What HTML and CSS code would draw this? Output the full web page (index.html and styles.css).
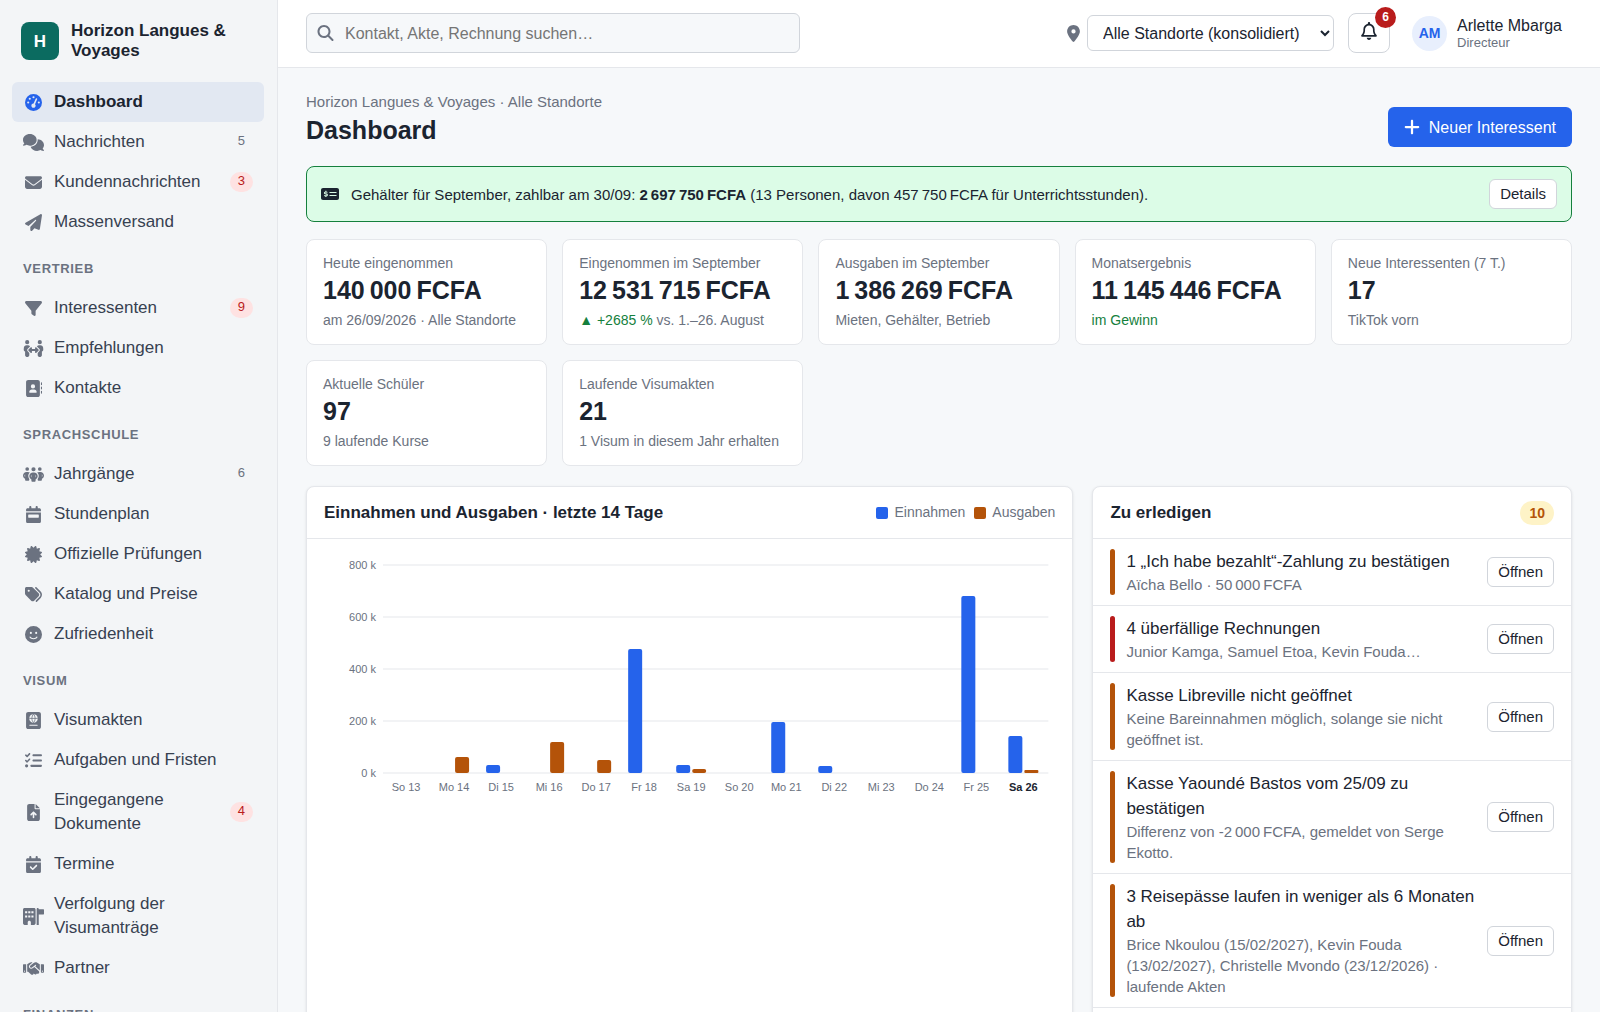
FILE: index.html
```html
<!DOCTYPE html>
<html lang="de">
  <head>
    <meta charset="UTF-8" />
    <meta name="viewport" content="width=device-width, initial-scale=1.0" />
    <title>Dashboard · Horizon Langues & Voyages</title>
    <link rel="stylesheet" href="styles.css">
  </head>
  <body>
    <div class="app">
      <aside class="sidebar">
        <div class="brand">
          <span class="brand-logo">H</span>
          <span class="brand-name">Horizon Langues &amp; Voyages</span>
        </div>

        <nav class="nav">
          <a class="nav-item active" href="#">
            <svg class="icon" viewBox="0 0 512 512"><path d="M0 256a256 256 0 1 1 512 0A256 256 0 1 1 0 256zM288 96a32 32 0 1 0 -64 0 32 32 0 1 0 64 0zM256 416c35.3 0 64-28.7 64-64c0-17.4-6.9-33.1-18.1-44.6L366 161.7c5.3-12.1-.2-26.3-12.3-31.6s-26.3 .2-31.6 12.3L257.9 288c-.6 0-1.3 0-1.9 0c-35.3 0-64 28.7-64 64s28.7 64 64 64zM176 144a32 32 0 1 0 -64 0 32 32 0 1 0 64 0zM96 288a32 32 0 1 0 0-64 32 32 0 1 0 0 64zm352-32a32 32 0 1 0 -64 0 32 32 0 1 0 64 0z"/></svg>
            <span class="nav-text">Dashboard</span>
          </a>
          <a class="nav-item" href="#">
            <svg class="icon" viewBox="0 0 640 512"><path d="M208 352c114.9 0 208-78.8 208-176S322.9 0 208 0S0 78.8 0 176c0 38.6 14.7 74.3 39.6 103.4c-3.5 9.4-8.7 17.7-14.2 24.7c-4.8 6.2-9.7 11-13.3 14.3c-1.8 1.6-3.3 2.9-4.3 3.7c-.5 .4-.9 .7-1.1 .8l-.2 .2C1 327.2-1.4 334.4 .8 340.9S9.1 352 16 352c21.8 0 43.8-5.6 62.1-12.5c9.2-3.5 17.8-7.4 25.2-11.4C134.1 343.3 169.8 352 208 352zM448 176c0 112.3-99.1 196.9-216.5 207C255.8 457.4 336.4 512 432 512c38.2 0 73.9-8.7 104.7-23.9c7.5 4 16 7.9 25.2 11.4c18.3 6.9 40.3 12.5 62.1 12.5c6.9 0 13.1-4.5 15.2-11.1c2.1-6.6-.2-13.8-5.8-17.9l-.2-.2c-.2-.2-.6-.4-1.1-.8c-1-.8-2.5-2-4.3-3.7c-3.6-3.3-8.5-8.1-13.3-14.3c-5.5-7-10.7-15.4-14.2-24.7c24.9-29 39.6-64.7 39.6-103.4c0-92.8-84.9-168.9-192.6-175.5c.4 5.1 .6 10.3 .6 15.5z"/></svg>
            <span class="nav-text">Nachrichten</span>
            <span class="count">5</span>
          </a>
          <a class="nav-item" href="#">
            <svg class="icon" viewBox="0 0 512 512"><path d="M48 64C21.5 64 0 85.5 0 112c0 15.1 7.1 29.3 19.2 38.4L236.8 313.6c11.4 8.5 27 8.5 38.4 0L492.8 150.4c12.1-9.1 19.2-23.3 19.2-38.4c0-26.5-21.5-48-48-48H48zM0 176V384c0 35.3 28.7 64 64 64H448c35.3 0 64-28.7 64-64V176L294.4 339.2c-22.8 17.1-54 17.1-76.8 0L0 176z"/></svg>
            <span class="nav-text">Kundennachrichten</span>
            <span class="count alert">3</span>
          </a>
          <a class="nav-item" href="#">
            <svg class="icon" viewBox="0 0 512 512"><path d="M498.1 5.6c10.1 7 15.4 19.1 13.5 31.2l-64 416c-1.5 9.7-7.4 18.2-16 23s-18.9 5.4-28 1.6L284 427.7l-68.5 74.1c-8.9 9.7-22.9 12.9-35.2 8.1S160 493.2 160 480V396.4c0-4 1.5-7.8 4.2-10.7L331.8 202.8c5.8-6.3 5.6-16-.4-22s-15.7-6.4-22-.7L106 360.8 17.7 316.6C7.1 311.3 .3 300.7 0 288.9s5.9-22.8 16.1-28.7l448-256c10.7-6.1 23.9-5.5 34 1.4z"/></svg>
            <span class="nav-text">Massenversand</span>
          </a>

          <h2 class="nav-title">Vertrieb</h2>
          <a class="nav-item" href="#">
            <svg class="icon" viewBox="0 0 512 512"><path d="M3.9 54.9C10.5 40.9 24.5 32 40 32H472c15.5 0 29.5 8.9 36.1 22.9s4.6 30.5-5.2 42.5L320 320.9V448c0 12.1-6.8 23.2-17.7 28.6s-23.8 4.3-33.5-3l-64-48c-8.1-6-12.8-15.5-12.8-25.6V320.9L9 97.3C-.7 85.4-2.8 68.8 3.9 54.9z"/></svg>
            <span class="nav-text">Interessenten</span>
            <span class="count alert">9</span>
          </a>
          <a class="nav-item" href="#">
            <svg class="icon" viewBox="0 0 640 512"><path d="M64 64a64 64 0 1 1 128 0A64 64 0 1 1 64 64zM25.9 233.4C29.3 191.9 64 160 105.6 160l44.8 0c27 0 51 13.4 65.5 34.1c-2.7 1.9-5.2 4-7.5 6.3l-64 64c-21.9 21.9-21.9 57.3 0 79.2L192 391.2 192 464c0 26.5-21.5 48-48 48l-32 0c-26.5 0-48-21.5-48-48l0-115.7c-26.5-9.5-44.7-35.8-42.2-65.6l4.1-49.3zM448 64a64 64 0 1 1 128 0A64 64 0 1 1 448 64zM431.6 200.4c-2.3-2.3-4.9-4.4-7.5-6.3c14.5-20.7 38.6-34.1 65.5-34.1l44.8 0c41.6 0 76.3 31.9 79.7 73.4l4.1 49.3c2.5 29.8-15.7 56.1-42.2 65.6L576 464c0 26.5-21.5 48-48 48l-32 0c-26.5 0-48-21.5-48-48l0-72.8 47.6-47.6c21.9-21.9 21.9-57.3 0-79.2l-64-64zM272 240l0 32 96 0 0-32c0-9.7 5.8-18.5 14.8-22.2s19.3-1.7 26.2 5.2l64 64c9.4 9.4 9.4 24.6 0 33.9l-64 64c-6.9 6.9-17.2 8.9-26.2 5.2s-14.8-12.5-14.8-22.2l0-32-96 0 0 32c0 9.7-5.8 18.5-14.8 22.2s-19.3 1.7-26.2-5.2l-64-64c-9.4-9.4-9.4-24.6 0-33.9l64-64c6.9-6.9 17.2-8.9 26.2-5.2s14.8 12.5 14.8 22.2z"/></svg>
            <span class="nav-text">Empfehlungen</span>
          </a>
          <a class="nav-item" href="#">
            <svg class="icon" viewBox="0 0 512 512"><path d="M96 0C60.7 0 32 28.7 32 64V448c0 35.3 28.7 64 64 64H384c35.3 0 64-28.7 64-64V64c0-35.3-28.7-64-64-64H96zM208 288h64c44.2 0 80 35.8 80 80c0 8.8-7.2 16-16 16H144c-8.8 0-16-7.2-16-16c0-44.2 35.8-80 80-80zm-32-96a64 64 0 1 1 128 0 64 64 0 1 1 -128 0zM512 80c0-8.8-7.2-16-16-16s-16 7.2-16 16v64c0 8.8 7.2 16 16 16s16-7.2 16-16V80zM496 192c-8.8 0-16 7.2-16 16v64c0 8.8 7.2 16 16 16s16-7.2 16-16V208c0-8.8-7.2-16-16-16zm16 144c0-8.8-7.2-16-16-16s-16 7.2-16 16v64c0 8.8 7.2 16 16 16s16-7.2 16-16V336z"/></svg>
            <span class="nav-text">Kontakte</span>
          </a>

          <h2 class="nav-title">Sprachschule</h2>
          <a class="nav-item" href="#">
            <svg class="icon" viewBox="0 0 640 512"><path d="M72 88a56 56 0 1 1 112 0A56 56 0 1 1 72 88zM64 245.7C54 256.9 48 271.8 48 288s6 31.1 16 42.3V245.7zm144.4-49.3C178.7 222.7 160 261.2 160 304c0 34.3 12 65.8 32 90.5V416c0 17.7-14.3 32-32 32H96c-17.7 0-32-14.3-32-32V389.2C26.2 371.2 0 332.7 0 288c0-61.9 50.1-112 112-112h32c24 0 46.2 7.5 64.4 20.3zM448 416V394.5c20-24.7 32-56.2 32-90.5c0-42.8-18.7-81.3-48.4-107.7C449.8 183.5 472 176 496 176h32c61.9 0 112 50.1 112 112c0 44.7-26.2 83.2-64 101.2V416c0 17.7-14.3 32-32 32H480c-17.7 0-32-14.3-32-32zm8-328a56 56 0 1 1 112 0A56 56 0 1 1 456 88zM576 245.7v84.7c10-11.3 16-26.1 16-42.3s-6-31.1-16-42.3zM320 32a64 64 0 1 1 0 128 64 64 0 1 1 0-128zM240 304c0 16.2 6 31 16 42.3V261.7c-10 11.3-16 26.1-16 42.3zm144-42.3v84.7c10-11.3 16-26.1 16-42.3s-6-31.1-16-42.3zM448 304c0 44.7-26.2 83.2-64 101.2V448c0 17.7-14.3 32-32 32H288c-17.7 0-32-14.3-32-32V405.2c-37.8-18-64-56.5-64-101.2c0-61.9 50.1-112 112-112h32c61.9 0 112 50.1 112 112z"/></svg>
            <span class="nav-text">Jahrgänge</span>
            <span class="count">6</span>
          </a>
          <a class="nav-item" href="#">
            <svg class="icon" viewBox="0 0 448 512"><path d="M128 0c17.7 0 32 14.3 32 32V64H288V32c0-17.7 14.3-32 32-32s32 14.3 32 32V64h48c26.5 0 48 21.5 48 48v48H0V112C0 85.5 21.5 64 48 64H96V32c0-17.7 14.3-32 32-32zM0 192H448V464c0 26.5-21.5 48-48 48H48c-26.5 0-48-21.5-48-48V192zm80 64c-8.8 0-16 7.2-16 16v64c0 8.8 7.2 16 16 16H368c8.8 0 16-7.2 16-16V272c0-8.8-7.2-16-16-16H80z"/></svg>
            <span class="nav-text">Stundenplan</span>
          </a>
          <a class="nav-item" href="#">
            <svg class="icon" viewBox="0 0 512 512"><path d="M211 7.3C205 1 196-1.4 187.6 .8s-14.9 8.9-17.1 17.3L154.7 80.6l-62-17.5c-8.4-2.4-17.4 0-23.5 6.1s-8.5 15.1-6.1 23.5l17.5 62L18.1 170.6c-8.4 2.1-15 8.7-17.3 17.1S1 205 7.3 211l46.2 45L7.3 301C1 307-1.4 316 .8 324.4s8.9 14.9 17.3 17.1l62.5 15.8-17.5 62c-2.4 8.4 0 17.4 6.1 23.5s15.1 8.5 23.5 6.1l62-17.5 15.8 62.5c2.1 8.4 8.7 15 17.1 17.3s17.3-.2 23.4-6.4l45-46.2 45 46.2c6.1 6.2 15 8.7 23.4 6.4s14.9-8.9 17.1-17.3l15.8-62.5 62 17.5c8.4 2.4 17.4 0 23.5-6.1s8.5-15.1 6.1-23.5l-17.5-62 62.5-15.8c8.4-2.1 15-8.7 17.3-17.1s-.2-17.4-6.4-23.4l-46.2-45 46.2-45c6.2-6.1 8.7-15 6.4-23.4s-8.9-14.9-17.3-17.1l-62.5-15.8 17.5-62c2.4-8.4 0-17.4-6.1-23.5s-15.1-8.5-23.5-6.1l-62 17.5L341.4 18.1c-2.1-8.4-8.7-15-17.1-17.3S307 1 301 7.3L256 53.5 211 7.3z"/></svg>
            <span class="nav-text">Offizielle Prüfungen</span>
          </a>
          <a class="nav-item" href="#">
            <svg class="icon" viewBox="0 0 512 512"><path d="M345 39.1L472.8 168.4c52.4 53 52.4 138.2 0 191.2L360.8 472.9c-9.3 9.4-24.5 9.5-33.9 .2s-9.5-24.5-.2-33.9L438.6 325.9c33.9-34.3 33.9-89.4 0-123.7L310.9 72.9c-9.3-9.4-9.2-24.6 .2-33.9s24.6-9.2 33.9 .2zM0 229.5V80C0 53.5 21.5 32 48 32H197.5c17 0 33.3 6.7 45.3 18.7l168 168c25 25 25 65.5 0 90.5L277.3 442.7c-25 25-65.5 25-90.5 0l-168-168C6.7 262.7 0 246.5 0 229.5zM144 144a32 32 0 1 0 -64 0 32 32 0 1 0 64 0z"/></svg>
            <span class="nav-text">Katalog und Preise</span>
          </a>
          <a class="nav-item" href="#">
            <svg class="icon" viewBox="0 0 512 512"><path d="M256 512A256 256 0 1 0 256 0a256 256 0 1 0 0 512zM164.1 325.5C182 346.2 212.6 368 256 368s74-21.8 91.9-42.5c5.8-6.7 15.9-7.4 22.6-1.6s7.4 15.9 1.6 22.6C349.8 372.1 311.1 400 256 400s-93.8-27.9-116.1-53.5c-5.8-6.7-5.1-16.8 1.6-22.6s16.8-5.1 22.6 1.6zM144.4 208a32 32 0 1 1 64 0 32 32 0 1 1 -64 0zm192-32a32 32 0 1 1 0 64 32 32 0 1 1 0-64z"/></svg>
            <span class="nav-text">Zufriedenheit</span>
          </a>

          <h2 class="nav-title">Visum</h2>
          <a class="nav-item" href="#">
            <svg class="icon" viewBox="0 0 448 512">
              <path d="M0 64C0 28.7 28.7 0 64 0H384c35.3 0 64 28.7 64 64V448c0 35.3-28.7 64-64 64H64c-35.3 0-64-28.7-64-64V64zM224 64a128 128 0 1 0 0 256 128 128 0 1 0 0-256zM112 384c-8.8 0-16 7.2-16 16s7.2 16 16 16H336c8.8 0 16-7.2 16-16s-7.2-16-16-16H112z"/>
              <path class="icon-line" d="M96 192H352M224 64C160 130 160 254 224 320M224 64C288 130 288 254 224 320"/>
            </svg>
            <span class="nav-text">Visumakten</span>
          </a>
          <a class="nav-item" href="#">
            <svg class="icon" viewBox="0 0 512 512"><path d="M152.1 38.2c9.9 8.9 10.7 24 1.8 33.9l-72 80c-4.4 4.9-10.6 7.8-17.2 7.9s-12.9-2.4-17.6-7L7 113C-2.3 103.6-2.3 88.4 7 79s24.6-9.4 33.9 0l22.1 22.1 55.1-61.2c8.9-9.9 24-10.7 33.9-1.8zm0 160c9.9 8.9 10.7 24 1.8 33.9l-72 80c-4.4 4.9-10.6 7.8-17.2 7.9s-12.9-2.4-17.6-7L7 273c-9.4-9.4-9.4-24.6 0-33.9s24.6-9.4 33.9 0l22.1 22.1 55.1-61.2c8.9-9.9 24-10.7 33.9-1.8zM224 96c0-17.7 14.3-32 32-32H480c17.7 0 32 14.3 32 32s-14.3 32-32 32H256c-17.7 0-32-14.3-32-32zm0 160c0-17.7 14.3-32 32-32H480c17.7 0 32 14.3 32 32s-14.3 32-32 32H256c-17.7 0-32-14.3-32-32zM160 416c0-17.7 14.3-32 32-32H480c17.7 0 32 14.3 32 32s-14.3 32-32 32H192c-17.7 0-32-14.3-32-32zM48 368a48 48 0 1 1 0 96 48 48 0 1 1 0-96z"/></svg>
            <span class="nav-text">Aufgaben und Fristen</span>
          </a>
          <a class="nav-item" href="#">
            <svg class="icon" viewBox="0 0 384 512"><path d="M64 0C28.7 0 0 28.7 0 64V448c0 35.3 28.7 64 64 64H320c35.3 0 64-28.7 64-64V160H256c-17.7 0-32-14.3-32-32V0H64zM256 0V128H384L256 0zM216 408c0 13.3-10.7 24-24 24s-24-10.7-24-24V305.9l-31 31c-9.4 9.4-24.6 9.4-33.9 0s-9.4-24.6 0-33.9l72-72c9.4-9.4 24.6-9.4 33.9 0l72 72c9.4 9.4 9.4 24.6 0 33.9s-24.6 9.4-33.9 0l-31-31V408z"/></svg>
            <span class="nav-text">Eingegangene Dokumente</span>
            <span class="count alert">4</span>
          </a>
          <a class="nav-item" href="#">
            <svg class="icon" viewBox="0 0 448 512"><path d="M128 0c17.7 0 32 14.3 32 32V64H288V32c0-17.7 14.3-32 32-32s32 14.3 32 32V64h48c26.5 0 48 21.5 48 48v48H0V112C0 85.5 21.5 64 48 64H96V32c0-17.7 14.3-32 32-32zM0 192H448V464c0 26.5-21.5 48-48 48H48c-26.5 0-48-21.5-48-48V192zM329 305c9.4-9.4 9.4-24.6 0-33.9s-24.6-9.4-33.9 0l-95 95-47-47c-9.4-9.4-24.6-9.4-33.9 0s-9.4 24.6 0 33.9l64 64c9.4 9.4 24.6 9.4 33.9 0L329 305z"/></svg>
            <span class="nav-text">Termine</span>
          </a>
          <a class="nav-item" href="#">
            <svg class="icon" viewBox="0 0 640 512"><path d="M48 0C21.5 0 0 21.5 0 48V464c0 26.5 21.5 48 48 48h96V432c0-26.5 21.5-48 48-48s48 21.5 48 48v80h96c26.5 0 48-21.5 48-48V48c0-26.5-21.5-48-48-48H48zM64 96h64v64H64zM160 96h64v64h-64zM256 96h64v64h-64zM64 224h64v64H64zM160 224h64v64h-64zM256 224h64v64h-64zM448 0c-17.7 0-32 14.3-32 32V512h64V192H624c8.8 0 16-7.2 16-16V48c0-8.8-7.2-16-16-16H480c0-17.7-14.3-32-32-32z"/></svg>
            <span class="nav-text">Verfolgung der Visumanträge</span>
          </a>
          <a class="nav-item" href="#">
            <svg class="icon" viewBox="0 0 640 512"><path d="M323.4 85.2l-96.8 78.4c-16.1 13-19.2 36.4-7 53.1c12.9 17.8 38 21.3 55.3 7.8l99.3-77.2c7-5.4 17-4.2 22.5 2.8s4.2 17-2.8 22.5l-20.9 16.2L512 316.8V128h-.7l-3.9-2.5L434.8 79c-15.3-9.8-33.2-15-51.4-15c-21.8 0-43 7.5-60 21.2zm22.8 124.4l-51.7 40.2C263 274.3 217.3 268 193.7 235.6c-22.2-30.5-16.6-73.1 12.7-96.8l83.2-67.3c-11.6-4.9-24.1-7.4-36.8-7.4C234 64 215.7 69.6 200 80l-72 48V352h28.2l91.4 83.4c19.6 17.9 49.9 16.5 67.8-3.1c5.5-6.1 9.2-13.2 11.1-20.6l17 15.6c19.5 17.9 49.9 16.6 67.8-2.9c4.5-4.9 7.8-10.6 9.9-16.5c19.4 13 45.8 10.3 62.1-7.5c17.9-19.5 16.6-49.9-2.9-67.8l-134.2-123zM16 128c-8.8 0-16 7.2-16 16V352c0 17.7 14.3 32 32 32H64c17.7 0 32-14.3 32-32V128H16zM48 320a16 16 0 1 1 0 32 16 16 0 1 1 0-32zM544 128V352c0 17.7 14.3 32 32 32h32c17.7 0 32-14.3 32-32V144c0-8.8-7.2-16-16-16H544zm32 208a16 16 0 1 1 32 0 16 16 0 1 1 -32 0z"/></svg>
            <span class="nav-text">Partner</span>
          </a>

          <h2 class="nav-title">Finanzen</h2>
        </nav>
      </aside>

      <div class="page">
        <header class="topbar">
          <label class="search">
            <svg class="icon" viewBox="0 0 512 512"><path d="M416 208c0 45.9-14.9 88.3-40 122.7L502.6 457.4c12.5 12.5 12.5 32.8 0 45.3s-32.8 12.5-45.3 0L330.7 376c-34.4 25.2-76.8 40-122.7 40C93.1 416 0 322.9 0 208S93.1 0 208 0S416 93.1 416 208zM208 352a144 144 0 1 0 0-288 144 144 0 1 0 0 288z"/></svg>
            <input type="search" aria-label="Suche" placeholder="Kontakt, Akte, Rechnung suchen…" />
          </label>

          <div class="topbar-right">
            <label class="location">
              <svg class="pin" viewBox="0 0 384 512"><path d="M215.7 499.2C267 435 384 279.4 384 192C384 86 298 0 192 0S0 86 0 192c0 87.4 117 243 168.3 307.2c12.3 15.3 35.1 15.3 47.4 0zM192 128a64 64 0 1 1 0 128 64 64 0 1 1 0-128z"/></svg>
              <select aria-label="Standort">
                <option>Alle Standorte (konsolidiert)</option>
              </select>
            </label>
            <button class="bell" type="button" aria-label="Benachrichtigungen">
              <svg class="bell-icon" viewBox="0 0 448 512"><path d="M224 0c-17.7 0-32 14.3-32 32V51.2C119 66 64 130.6 64 208v25.4c0 45.4-15.5 89.5-43.8 124.9L5.3 377c-5.8 7.2-6.9 17.1-2.9 25.4S14.8 416 24 416H424c9.2 0 17.6-5.3 21.6-13.6s2.9-18.2-2.9-25.4l-14.9-18.6C399.5 322.9 384 278.8 384 233.4V208c0-77.4-55-142-128-156.8V32c0-17.7-14.3-32-32-32zm0 96c61.9 0 112 50.1 112 112v25.4c0 47.9 13.9 94.6 39.7 134.6H72.3C98.1 328 112 281.3 112 233.4V208c0-61.9 50.1-112 112-112zm64 352H224 160c0 17 6.7 33.3 18.7 45.3s28.3 18.7 45.3 18.7s33.3-6.7 45.3-18.7s18.7-28.3 18.7-45.3z"/></svg>
              <span class="bell-count">6</span>
            </button>
            <a class="user" href="#">
              <span class="avatar">AM</span>
              <span class="user-info">
                <span class="user-name">Arlette Mbarga</span>
                <span class="user-role">Directeur</span>
              </span>
            </a>
          </div>
        </header>

        <main class="content">
          <div class="page-head">
            <div>
              <p class="breadcrumb">Horizon Langues &amp; Voyages · Alle Standorte</p>
              <h1>Dashboard</h1>
            </div>
            <button class="btn-primary" type="button">
              <svg class="plus" viewBox="0 0 448 512"><path d="M256 80c0-17.7-14.3-32-32-32s-32 14.3-32 32V224H48c-17.7 0-32 14.3-32 32s14.3 32 32 32H192V432c0 17.7 14.3 32 32 32s32-14.3 32-32V288H400c17.7 0 32-14.3 32-32s-14.3-32-32-32H256V80z"/></svg>
              Neuer Interessent
            </button>
          </div>

          <div class="notice">
            <svg class="notice-icon" viewBox="0 0 576 512">
              <path d="M64 64C28.7 64 0 92.7 0 128V384c0 35.3 28.7 64 64 64H512c35.3 0 64-28.7 64-64V128c0-35.3-28.7-64-64-64H64z"/>
              <path class="notice-line" d="M272 208H496M272 304H496M204 208C190 188 108 184 108 222C108 262 206 242 206 286C206 326 124 322 106 300M156 152V184M156 320V352"/>
            </svg>
            <p>Gehälter für September, zahlbar am 30/09: <strong>2&#8239;697&#8239;750&#8239;FCFA</strong> (13 Personen, davon 457&#8239;750&#8239;FCFA für Unterrichtsstunden).</p>
            <button class="btn" type="button">Details</button>
          </div>

          <section class="stats">
            <article class="stat">
              <p class="stat-label">Heute eingenommen</p>
              <p class="stat-value">140&#8239;000&#8239;FCFA</p>
              <p class="stat-note">am 26/09/2026 · Alle Standorte</p>
            </article>
            <article class="stat">
              <p class="stat-label">Eingenommen im September</p>
              <p class="stat-value">12&#8239;531&#8239;715&#8239;FCFA</p>
              <p class="stat-note"><span class="up">▲ +2685 %</span> vs. 1.–26. August</p>
            </article>
            <article class="stat">
              <p class="stat-label">Ausgaben im September</p>
              <p class="stat-value">1&#8239;386&#8239;269&#8239;FCFA</p>
              <p class="stat-note">Mieten, Gehälter, Betrieb</p>
            </article>
            <article class="stat">
              <p class="stat-label">Monatsergebnis</p>
              <p class="stat-value">11&#8239;145&#8239;446&#8239;FCFA</p>
              <p class="stat-note"><span class="up">im Gewinn</span></p>
            </article>
            <article class="stat">
              <p class="stat-label">Neue Interessenten (7 T.)</p>
              <p class="stat-value">17</p>
              <p class="stat-note">TikTok vorn</p>
            </article>
            <article class="stat">
              <p class="stat-label">Aktuelle Schüler</p>
              <p class="stat-value">97</p>
              <p class="stat-note">9 laufende Kurse</p>
            </article>
            <article class="stat">
              <p class="stat-label">Laufende Visumakten</p>
              <p class="stat-value">21</p>
              <p class="stat-note">1 Visum in diesem Jahr erhalten</p>
            </article>
          </section>

          <div class="panels">
            <section class="panel">
              <header class="panel-head">
                <h2>Einnahmen und Ausgaben · letzte 14 Tage</h2>
                <div class="legend">
                  <span class="legend-item"><i class="swatch income"></i>Einnahmen</span>
                  <span class="legend-item"><i class="swatch expense"></i>Ausgaben</span>
                </div>
              </header>
              <svg class="chart" viewBox="0 0 731 244" role="img" aria-label="Einnahmen und Ausgaben">
                <g class="grid">
                  <path d="M59 10H724M59 62H724M59 114H724M59 166H724M59 218H724"/>
                </g>
                <g class="axis-y">
                  <text x="52" y="14">800 k</text>
                  <text x="52" y="66">600 k</text>
                  <text x="52" y="118">400 k</text>
                  <text x="52" y="170">200 k</text>
                  <text x="52" y="222">0 k</text>
                </g>
                <g class="bar-income">
                  <rect x="162" y="210" width="14" height="8" rx="2"/>
                  <rect x="304" y="94" width="14" height="124" rx="2"/>
                  <rect x="352" y="210" width="14" height="8" rx="2"/>
                  <rect x="447" y="167" width="14" height="51" rx="2"/>
                  <rect x="494" y="211" width="14" height="7" rx="2"/>
                  <rect x="637" y="41" width="14" height="177" rx="2"/>
                  <rect x="684" y="181" width="14" height="37" rx="2"/>
                </g>
                <g class="bar-expense">
                  <rect x="131" y="202" width="14" height="16" rx="2"/>
                  <rect x="226" y="187" width="14" height="31" rx="2"/>
                  <rect x="273" y="205" width="14" height="13" rx="2"/>
                  <rect x="368" y="214" width="14" height="4" rx="2"/>
                  <rect x="700" y="215" width="14" height="3" rx="1"/>
                </g>
                <g class="axis-x">
                  <text x="82" y="236">So 13</text>
                  <text x="130" y="236">Mo 14</text>
                  <text x="177" y="236">Di 15</text>
                  <text x="225" y="236">Mi 16</text>
                  <text x="272" y="236">Do 17</text>
                  <text x="320" y="236">Fr 18</text>
                  <text x="367" y="236">Sa 19</text>
                  <text x="415" y="236">So 20</text>
                  <text x="462" y="236">Mo 21</text>
                  <text x="510" y="236">Di 22</text>
                  <text x="557" y="236">Mi 23</text>
                  <text x="605" y="236">Do 24</text>
                  <text x="652" y="236">Fr 25</text>
                  <text x="699" y="236" class="today">Sa 26</text>
                </g>
              </svg>
            </section>

            <section class="panel">
              <header class="panel-head">
                <h2>Zu erledigen</h2>
                <span class="todo-count">10</span>
              </header>
              <ul class="todo">
                <li>
                  <div class="todo-text">
                    <p class="todo-title">1 „Ich habe bezahlt“-Zahlung zu bestätigen</p>
                    <p class="todo-sub">Aïcha Bello · 50&#8239;000&#8239;FCFA</p>
                  </div>
                  <button class="btn" type="button">Öffnen</button>
                </li>
                <li class="danger">
                  <div class="todo-text">
                    <p class="todo-title">4 überfällige Rechnungen</p>
                    <p class="todo-sub">Junior Kamga, Samuel Etoa, Kevin Fouda…</p>
                  </div>
                  <button class="btn" type="button">Öffnen</button>
                </li>
                <li>
                  <div class="todo-text">
                    <p class="todo-title">Kasse Libreville nicht geöffnet</p>
                    <p class="todo-sub">Keine Bareinnahmen möglich, solange sie nicht geöffnet ist.</p>
                  </div>
                  <button class="btn" type="button">Öffnen</button>
                </li>
                <li>
                  <div class="todo-text">
                    <p class="todo-title">Kasse Yaoundé Bastos vom 25/09 zu bestätigen</p>
                    <p class="todo-sub">Differenz von -2&#8239;000&#8239;FCFA, gemeldet von Serge Ekotto.</p>
                  </div>
                  <button class="btn" type="button">Öffnen</button>
                </li>
                <li>
                  <div class="todo-text">
                    <p class="todo-title">3 Reisepässe laufen in weniger als 6 Monaten ab</p>
                    <p class="todo-sub">Brice Nkoulou (15/02/2027), Kevin Fouda (13/02/2027), Christelle Mvondo (23/12/2026) · laufende Akten</p>
                  </div>
                  <button class="btn" type="button">Öffnen</button>
                </li>
              </ul>
            </section>
          </div>
        </main>
      </div>
    </div>
  </body>
</html>
```

FILE: styles.css
```css
:root {
  --bg: #f6f8fa;
  --sidebar: #f3f5f7;
  --border: #e5e7eb;
  --border-strong: #d1d5db;
  --text: #1b2430;
  --muted: #6b7280;
  --primary: #2563eb;
  --orange: #b45309;
  --red: #b91c1c;
  --green: #15803d;
}
* {
  box-sizing: border-box;
}
body {
  margin: 0;
  font-family: "Liberation Sans", Arial, sans-serif;
  font-size: 16px;
  line-height: 25px;
  color: var(--text);
  background: var(--bg);
}
h1,
h2,
p,
ul {
  margin: 0;
  padding: 0;
}
a {
  color: inherit;
  text-decoration: none;
}
button,
input,
select {
  font: inherit;
  color: inherit;
}
button {
  cursor: pointer;
}
svg {
  fill: currentColor;
  fill-rule: evenodd;
}
.app {
  display: grid;
  grid-template-columns: 278px minmax(0, 1fr);
  height: 100vh;
}

/* Sidebar */
.sidebar {
  padding: 21px 13px 20px 12px;
  background: var(--sidebar);
  border-right: 1px solid var(--border);
  font-size: 17px;
  overflow-y: auto;
  scrollbar-width: none;
}
.brand {
  display: flex;
  align-items: center;
  gap: 12px;
  padding: 0 9px;
  margin-bottom: 21px;
}
.brand-logo {
  display: flex;
  align-items: center;
  justify-content: center;
  flex: none;
  width: 38px;
  height: 38px;
  border-radius: 8px;
  background: #0b6b60;
  color: #fff;
  font-weight: bold;
}
.brand-name {
  font-weight: bold;
  line-height: 20px;
}
.nav-item {
  display: flex;
  align-items: center;
  gap: 10px;
  padding: 8px 11px;
  border-radius: 6px;
  line-height: 24px;
  color: #374151;
}
.nav-item:hover {
  background: #e9edf3;
}
.nav-item.active {
  background: #e2e8f2;
  color: var(--text);
  font-weight: bold;
}
.icon {
  flex: none;
  width: 21px;
  height: 17px;
  color: var(--muted);
}
.active .icon {
  color: var(--primary);
}
.icon-line {
  fill: none;
  stroke: currentColor;
  stroke-width: 24;
}
.nav-text {
  flex: 1;
}
.count {
  padding: 1px 8px 3px;
  border-radius: 10px;
  font-size: 13px;
  line-height: 16px;
  color: var(--muted);
}
.count.alert {
  background: #fee2e2;
  color: var(--red);
}
.nav-title {
  padding: 19px 11px 11px;
  font-size: 13px;
  line-height: 16px;
  letter-spacing: 0.05em;
  text-transform: uppercase;
  color: var(--muted);
}

/* Topbar */
.page {
  display: flex;
  flex-direction: column;
  min-width: 0;
  min-height: 0;
}
.topbar {
  display: flex;
  align-items: center;
  justify-content: space-between;
  gap: 20px;
  flex: none;
  padding: 13px 28px 14px;
  background: #fff;
  border-bottom: 1px solid var(--border);
}
.search {
  display: flex;
  align-items: center;
  gap: 9px;
  flex: 0 1 494px;
  height: 40px;
  padding: 0 8px;
  border: 1px solid var(--border-strong);
  border-radius: 6px;
  background: var(--bg);
}
.search .icon {
  height: 16px;
}
.search input {
  flex: 1;
  min-width: 0;
  padding: 0;
  border: 0;
  outline: 0;
  background: none;
}
.search input::placeholder {
  color: #757575;
}
.topbar-right {
  display: flex;
  align-items: center;
  gap: 14px;
}
.location {
  display: flex;
  align-items: center;
  gap: 7px;
}
.pin {
  width: 13px;
  height: 17px;
  color: var(--muted);
}
.location select {
  width: 247px;
  height: 36px;
  padding: 0 0 0 11px;
  border: 1px solid var(--border-strong);
  border-radius: 6px;
  background: #fff;
}
.bell {
  position: relative;
  display: flex;
  align-items: center;
  justify-content: center;
  width: 42px;
  height: 40px;
  padding: 0 0 4px;
  border: 1px solid var(--border-strong);
  border-radius: 8px;
  background: #fff;
}
.bell-icon {
  width: 16px;
  height: 18px;
}
.bell-count {
  position: absolute;
  top: -7px;
  right: -7px;
  min-width: 21px;
  height: 21px;
  border-radius: 11px;
  background: var(--red);
  color: #fff;
  font-size: 12px;
  font-weight: bold;
  line-height: 21px;
}
.user {
  display: flex;
  align-items: center;
  gap: 10px;
  padding: 0 10px 0 8px;
}
.avatar {
  width: 35px;
  height: 35px;
  border-radius: 50%;
  background: #e8effd;
  color: var(--primary);
  font-size: 14px;
  font-weight: bold;
  line-height: 35px;
  text-align: center;
}
.user-info {
  display: flex;
  flex-direction: column;
}
.user-name {
  line-height: 18px;
}
.user-role {
  font-size: 13px;
  line-height: 15px;
  color: var(--muted);
}

/* Content */
.content {
  flex: 1;
  padding: 23px 28px;
  overflow-y: auto;
  scrollbar-width: none;
}
.page-head {
  display: flex;
  align-items: flex-end;
  justify-content: space-between;
  margin-bottom: 19px;
}
.breadcrumb {
  font-size: 15px;
  line-height: 22px;
  color: var(--muted);
}
h1 {
  font-size: 25px;
  line-height: 34px;
}
.btn-primary {
  display: flex;
  align-items: center;
  gap: 9px;
  height: 40px;
  padding: 0 16px;
  border: 0;
  border-radius: 6px;
  background: var(--primary);
  color: #fff;
}
.plus {
  width: 16px;
  height: 18px;
}
.btn {
  flex: none;
  height: 30px;
  padding: 0 10px;
  border: 1px solid var(--border-strong);
  border-radius: 6px;
  background: #fff;
  font-size: 15px;
  line-height: 20px;
}
.btn:hover {
  background: #f3f4f6;
}
.notice {
  display: flex;
  align-items: center;
  gap: 12px;
  padding: 12px 14px;
  margin-bottom: 17px;
  border: 1px solid var(--green);
  border-radius: 8px;
  background: #dcfce7;
  font-size: 15px;
}
.notice p {
  flex: 1;
}
.notice-icon {
  flex: none;
  width: 18px;
  height: 16px;
}
.notice-line {
  fill: none;
  stroke: #dcfce7;
  stroke-width: 34;
}
.stats {
  display: grid;
  grid-template-columns: repeat(auto-fill, minmax(220px, 1fr));
  gap: 15px;
  margin-bottom: 20px;
}
.stat {
  padding: 13px 16px;
  border: 1px solid var(--border);
  border-radius: 8px;
  background: #fff;
}
.stat-label,
.stat-note {
  font-size: 14px;
  line-height: 21px;
  color: var(--muted);
}
.stat-value {
  margin: 1px 0 4px;
  font-size: 25px;
  font-weight: bold;
  line-height: 31px;
}
.up {
  color: var(--green);
}
.panels {
  display: grid;
  grid-template-columns: minmax(0, 8fr) minmax(0, 5fr);
  gap: 19px;
}
.panel {
  border: 1px solid var(--border);
  border-radius: 8px;
  background: #fff;
  box-shadow: 0 1px 3px rgba(0, 0, 0, 0.1);
}
.panel-head {
  display: flex;
  align-items: center;
  justify-content: space-between;
  height: 52px;
  padding: 0 17px;
  border-bottom: 1px solid var(--border);
}
.panel-head h2 {
  font-size: 17px;
}
.legend {
  display: flex;
  gap: 9px;
  font-size: 14px;
  color: var(--muted);
}
.legend-item {
  display: flex;
  align-items: center;
  gap: 6px;
}
.swatch {
  width: 12px;
  height: 12px;
  border-radius: 2px;
}
.swatch.income {
  background: var(--primary);
}
.swatch.expense {
  background: var(--orange);
}
.todo-count {
  padding: 0 9px;
  border-radius: 12px;
  background: #fef3c7;
  color: var(--orange);
  font-size: 14px;
  font-weight: bold;
  line-height: 24px;
}

/* Chart */
.chart {
  display: block;
  width: 100%;
  padding: 16px 17px;
  font-size: 11px;
}
.grid path {
  stroke: var(--border);
}
.axis-y {
  text-anchor: end;
  fill: var(--muted);
}
.axis-x {
  text-anchor: middle;
  fill: var(--muted);
}
.bar-income {
  fill: var(--primary);
}
.bar-expense {
  fill: var(--orange);
}
.today {
  fill: var(--text);
  font-weight: bold;
}

/* To-do list */
.todo {
  list-style: none;
  padding-bottom: 12px;
}
.todo li {
  display: flex;
  align-items: center;
  gap: 11px;
  padding: 10px 17px;
  border-bottom: 1px solid var(--border);
}
.todo li::before {
  content: "";
  flex: none;
  align-self: stretch;
  width: 5px;
  border-radius: 3px;
  background: var(--orange);
}
.todo li.danger::before {
  background: var(--red);
}
.todo-text {
  flex: 1;
}
.todo-title {
  font-size: 17px;
}
.todo-sub {
  font-size: 15px;
  line-height: 21px;
  color: var(--muted);
}
```
